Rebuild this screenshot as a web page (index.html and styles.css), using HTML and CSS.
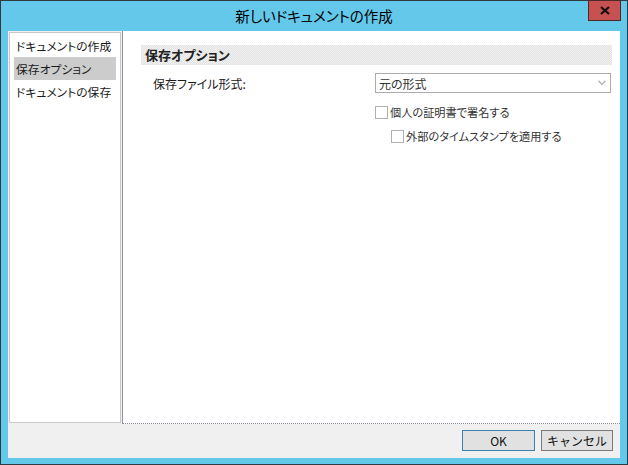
FILE: index.html
```html
<!DOCTYPE html>
<html lang="ja">

<head>
    <meta charset="UTF-8">
    <title>新しいドキュメントの作成</title>
    <link rel="stylesheet" href="styles.css">
</head>

<body>
    <div class="window">
        <!-- Title bar -->
        <div class="titlebar">新しいドキュメントの作成</div>
        <div class="close-btn">
            <svg width="10" height="9" viewBox="0 0 10 9">
                <path d="M1 1 L9 8 M9 1 L1 8" stroke="#111" stroke-width="2.2" fill="none"/>
            </svg>
        </div>

        <div class="client">
            <div class="main">
                <!-- Navigation list -->
                <ul class="nav-list">
                    <li>ドキュメントの作成</li>
                    <li class="selected">保存オプション</li>
                    <li>ドキュメントの保存</li>
                </ul>

                <!-- Options pane -->
                <div class="pane">
                    <div class="section-header">保存オプション</div>
                    <div class="form-row">
                        <label class="field-label">保存ファイル形式:</label>
                        <div class="select-box">
                            <span>元の形式</span>
                            <svg width="8" height="6" viewBox="0 0 8 6">
                                <path d="M0.5 0.8 L4 4.5 L7.5 0.8" stroke="#b4b4b4" stroke-width="1.4" fill="none"/>
                            </svg>
                        </div>
                    </div>
                    <div class="check-row">
                        <span class="checkbox"></span>
                        <span>個人の証明書で署名する</span>
                    </div>
                    <div class="check-row sub">
                        <span class="checkbox"></span>
                        <span>外部のタイムスタンプを適用する</span>
                    </div>
                </div>
            </div>

            <!-- Dialog buttons -->
            <div class="footer">
                <button class="btn btn-default">OK</button>
                <button class="btn">キャンセル</button>
            </div>
        </div>
    </div>
</body>

</html>
```

FILE: styles.css
```css
/* Colours of the dialog */
:root {
    --frame-color: #63c8ea;
    --client-bg: #f0f0f0;
    --text-color: #1a1a1a;
    --font: "Noto Sans CJK JP", "Noto Sans", sans-serif;
}

* {
    box-sizing: border-box;
}

body {
    margin: 0;
    font-family: var(--font);
    font-feature-settings: "palt";
    color: var(--text-color);
}

.window {
    position: relative;
    width: 628px;
    height: 465px;
    border: 1px solid #2e3b40;
    background-color: var(--frame-color);
    padding: 0 7px 6px 7px;
    display: flex;
    flex-direction: column;
}

/* Title bar */
.titlebar {
    height: 30px;
    line-height: 30px;
    text-align: center;
    font-size: 14.5px;
    color: #000;
}

.close-btn {
    position: absolute;
    top: -1px;
    right: 6px;
    width: 33px;
    height: 21px;
    background-color: #c75050;
    border: 1px solid #4d2a2a;
    display: flex;
    align-items: center;
    justify-content: center;
}

.client {
    flex: 1;
    background-color: var(--client-bg);
    display: flex;
    flex-direction: column;
}

.main {
    flex: 1;
    display: flex;
}

/* Navigation list */
.nav-list {
    list-style: none;
    margin: 1px;
    width: 112px;
    padding: 1px 4px;
    background-color: #fff;
    border: 1px solid #c9c9c9;
    font-size: 11.8px;
}

.nav-list li {
    height: 23px;
    line-height: 23px;
    padding-left: 2px;
    white-space: nowrap;
}

.nav-list li.selected {
    background-color: #cccccc;
}

/* Options pane */
.pane {
    flex: 1;
    background-color: #fff;
    border-left: 1px solid #8f8f9f;
    border-bottom: 1px dotted #8a8a98;
    padding: 14px 8px 0 18px;
    font-size: 12px;
}

.section-header {
    height: 20px;
    line-height: 20px;
    padding-left: 4px;
    font-size: 13px;
    font-weight: bold;
    color: #222;
    background: repeating-conic-gradient(#e2e2e2 0 25%, #f1f1f1 0 50%) 0 0 / 2px 2px;
}

.form-row {
    display: grid;
    grid-template-columns: 222px 1fr;
    align-items: center;
    margin-top: 8px;
    padding-left: 12px;
    margin-right: 1px;
}

.select-box {
    height: 20px;
    border: 1px solid #acacac;
    display: flex;
    align-items: center;
    justify-content: space-between;
    padding: 0 4px 0 3px;
    color: #333;
}

.check-row {
    height: 24px;
    display: flex;
    align-items: center;
    gap: 2px;
    margin-left: 234px;
    color: #333;
    font-size: 11.2px;
}

.form-row + .check-row {
    margin-top: 7px;
}

.check-row.sub {
    margin-left: 250px;
}

.checkbox {
    width: 13px;
    height: 13px;
    border: 1px solid #b0b0b0;
    background-color: #fff;
}

/* Footer buttons */
.footer {
    height: 34px;
    display: flex;
    justify-content: flex-end;
    align-items: flex-start;
    gap: 6px;
    padding: 6px 7px 0 0;
}

.btn {
    height: 21px;
    width: 72px;
    padding: 0;
    font-family: var(--font);
    font-size: 12px;
    color: #111;
    background-color: #e1e1e1;
    border: 1px solid #7a7a7a;
}

.btn-default {
    width: 73px;
    border-color: #3c7fb1;
}
```
